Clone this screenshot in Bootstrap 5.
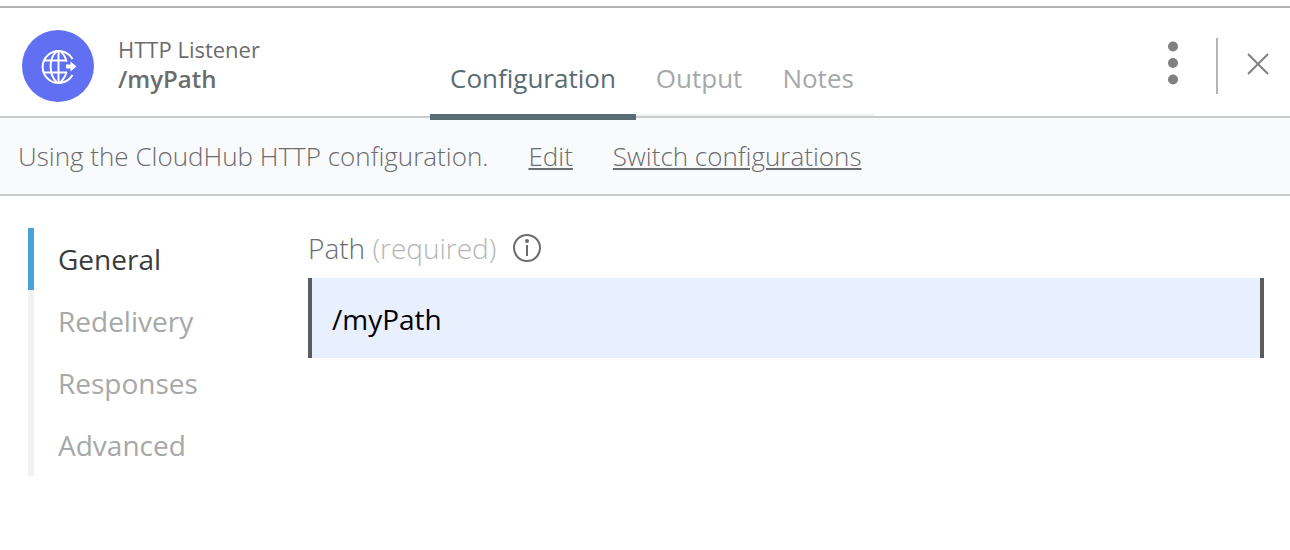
<!DOCTYPE html>
<html lang="en">
<head>
<meta charset="utf-8">
<meta name="viewport" content="width=device-width, initial-scale=1">
<title>HTTP Listener</title>
<link href="https://cdn.jsdelivr.net/npm/bootstrap@5.3.0/dist/css/bootstrap.min.css" rel="stylesheet">
<style>
body { font-family: "Open Sans", sans-serif; font-size: 26px; line-height: 36px; color: #6b6c6d; background: #fff; }
.panel { margin-top: 6px; border-top: 2px solid #b2b2b2; }
.panel-head { min-height: 110px; border-bottom: 2px solid #cacbcc; }
.identity { width: 430px; padding: 22px 0 0 22px; gap: 24px; }
.identity h1 { font-size: 22px; line-height: 30px; margin: 4px 0 0; font-weight: 400; }
.identity strong { font-size: 24px; line-height: 30px; font-weight: 600; display: block; }
.tabs { border-bottom: 2px solid #f0f1f1; }
.tabs .nav-link { font-size: 26px; line-height: 36px; color: #a7a8a8; padding: 0 20px 18px; margin-bottom: -6px; background: none; border: 0 solid transparent; border-bottom-width: 6px; border-radius: 0; }
.tabs .nav-link.active { color: #586c74; border-bottom-color: #586c74; }
.tools { padding: 30px 20px 0 0; }
.tools button { border: 0; background: none; padding: 0; line-height: 0; }
.divider { width: 2px; height: 56px; margin: 0 28px 0 36px; background: #b2b2b2; }
.notice { background: #f9fafc; border-bottom: 2px solid #cacbcc; font-weight: 300; padding: 20px 18px; gap: 40px; }
.notice a { color: inherit; text-decoration-thickness: 2px; text-underline-offset: 2px; }
.panel-body { padding: 32px 26px 32px 28px; }
.sections { width: 280px; font-size: 28px; }
.sections .nav-link { line-height: 38px; padding: 12px 24px; color: #a7a8a8; border-left: 6px solid #f1f2f2; border-radius: 0; text-align: left; }
.sections .nav-link.active { color: #3a3b3c; border-left-color: #49a2da; }
.field-head { gap: 16px; height: 40px; margin-bottom: 10px; font-size: 28px; font-weight: 300; }
.field-head span { color: #b4b5b5; }
.path-input { height: 80px; font-size: 28px; line-height: 38px; padding: 2px 20px 0; color: #000; background: #e8effe; border: solid #5b5c5c; border-width: 0 4px; border-radius: 0; }
.path-input:focus { color: #000; background: #e8effe; border-color: #5b5c5c; }
</style>
</head>
<body>
<main class="panel">
  <header class="panel-head d-flex">
    <div class="identity d-flex flex-shrink-0 align-items-start">
      <svg width="72" height="72" viewBox="0 0 72 72" aria-hidden="true">
        <circle cx="36" cy="36" r="36" fill="#616ff2"/>
        <g fill="none" stroke="#fff" stroke-width="2">
          <path d="M50.500 29A16 16 0 1 0 50.500 45"/>
          <path d="M36.500 20.500V53M22 30.500H45M22 42.500H45"/>
          <path d="M35 21C26.500 28 26.500 45 35 52.500M38 21C42 24 43.500 27 44.500 31.500M38 52.500C42 49 43.500 46 44.500 42"/>
        </g>
        <path d="M44 34.500H48.500V31.500L54.500 36.500L48.500 41.500V38.500H44Z" fill="#fff"/>
      </svg>
      <div><h1>HTTP Listener</h1><strong>/myPath</strong></div>
    </div>
    <nav class="tabs nav flex-nowrap align-items-end position-relative z-1" role="tablist" aria-label="Views">
      <button class="nav-link active" type="button" role="tab" aria-selected="true">Configuration</button>
      <button class="nav-link" type="button" role="tab" aria-selected="false">Output</button>
      <button class="nav-link" type="button" role="tab" aria-selected="false">Notes</button>
    </nav>
    <div class="tools d-flex align-items-start ms-auto">
      <button type="button" aria-label="More actions">
        <svg width="14" height="50" viewBox="0 0 14 50" fill="#7f8080"><circle cx="7" cy="8.500" r="5"/><circle cx="7" cy="25" r="5"/><circle cx="7" cy="41.500" r="5"/></svg>
      </button>
      <div class="divider"></div>
      <button type="button" aria-label="Close">
        <svg width="24" height="52" viewBox="0 0 24 52" fill="none" stroke="#7f8080" stroke-width="2"><path d="M2 16L22 36M22 16L2 36"/></svg>
      </button>
    </div>
  </header>
  <section class="notice d-flex flex-wrap">
    <span>Using the CloudHub HTTP configuration.</span>
    <a href="#edit">Edit</a>
    <a href="#switch">Switch configurations</a>
  </section>
  <div class="panel-body d-flex align-items-start">
    <nav class="sections nav flex-column flex-shrink-0" aria-label="Settings">
      <a class="nav-link active" href="#general" aria-current="page">General</a>
      <a class="nav-link" href="#redelivery">Redelivery</a>
      <a class="nav-link" href="#responses">Responses</a>
      <a class="nav-link" href="#advanced">Advanced</a>
    </nav>
    <form class="flex-grow-1">
      <div class="field-head d-flex align-items-center">
        <label for="path">Path <span>(required)</span></label>
        <svg width="30" height="30" viewBox="0 0 30 30" role="img" aria-label="Information"><circle cx="15" cy="15" r="13" fill="none" stroke="#6b6c6d" stroke-width="2"/><circle cx="15" cy="8" r="2" fill="#6b6c6d"/><path d="M15 12V23" stroke="#6b6c6d" stroke-width="2"/></svg>
      </div>
      <input class="path-input form-control shadow-none" id="path" type="text" value="/myPath">
    </form>
  </div>
</main>
<script src="https://cdn.jsdelivr.net/npm/bootstrap@5.3.0/dist/js/bootstrap.bundle.min.js"></script>
</body>
</html>
